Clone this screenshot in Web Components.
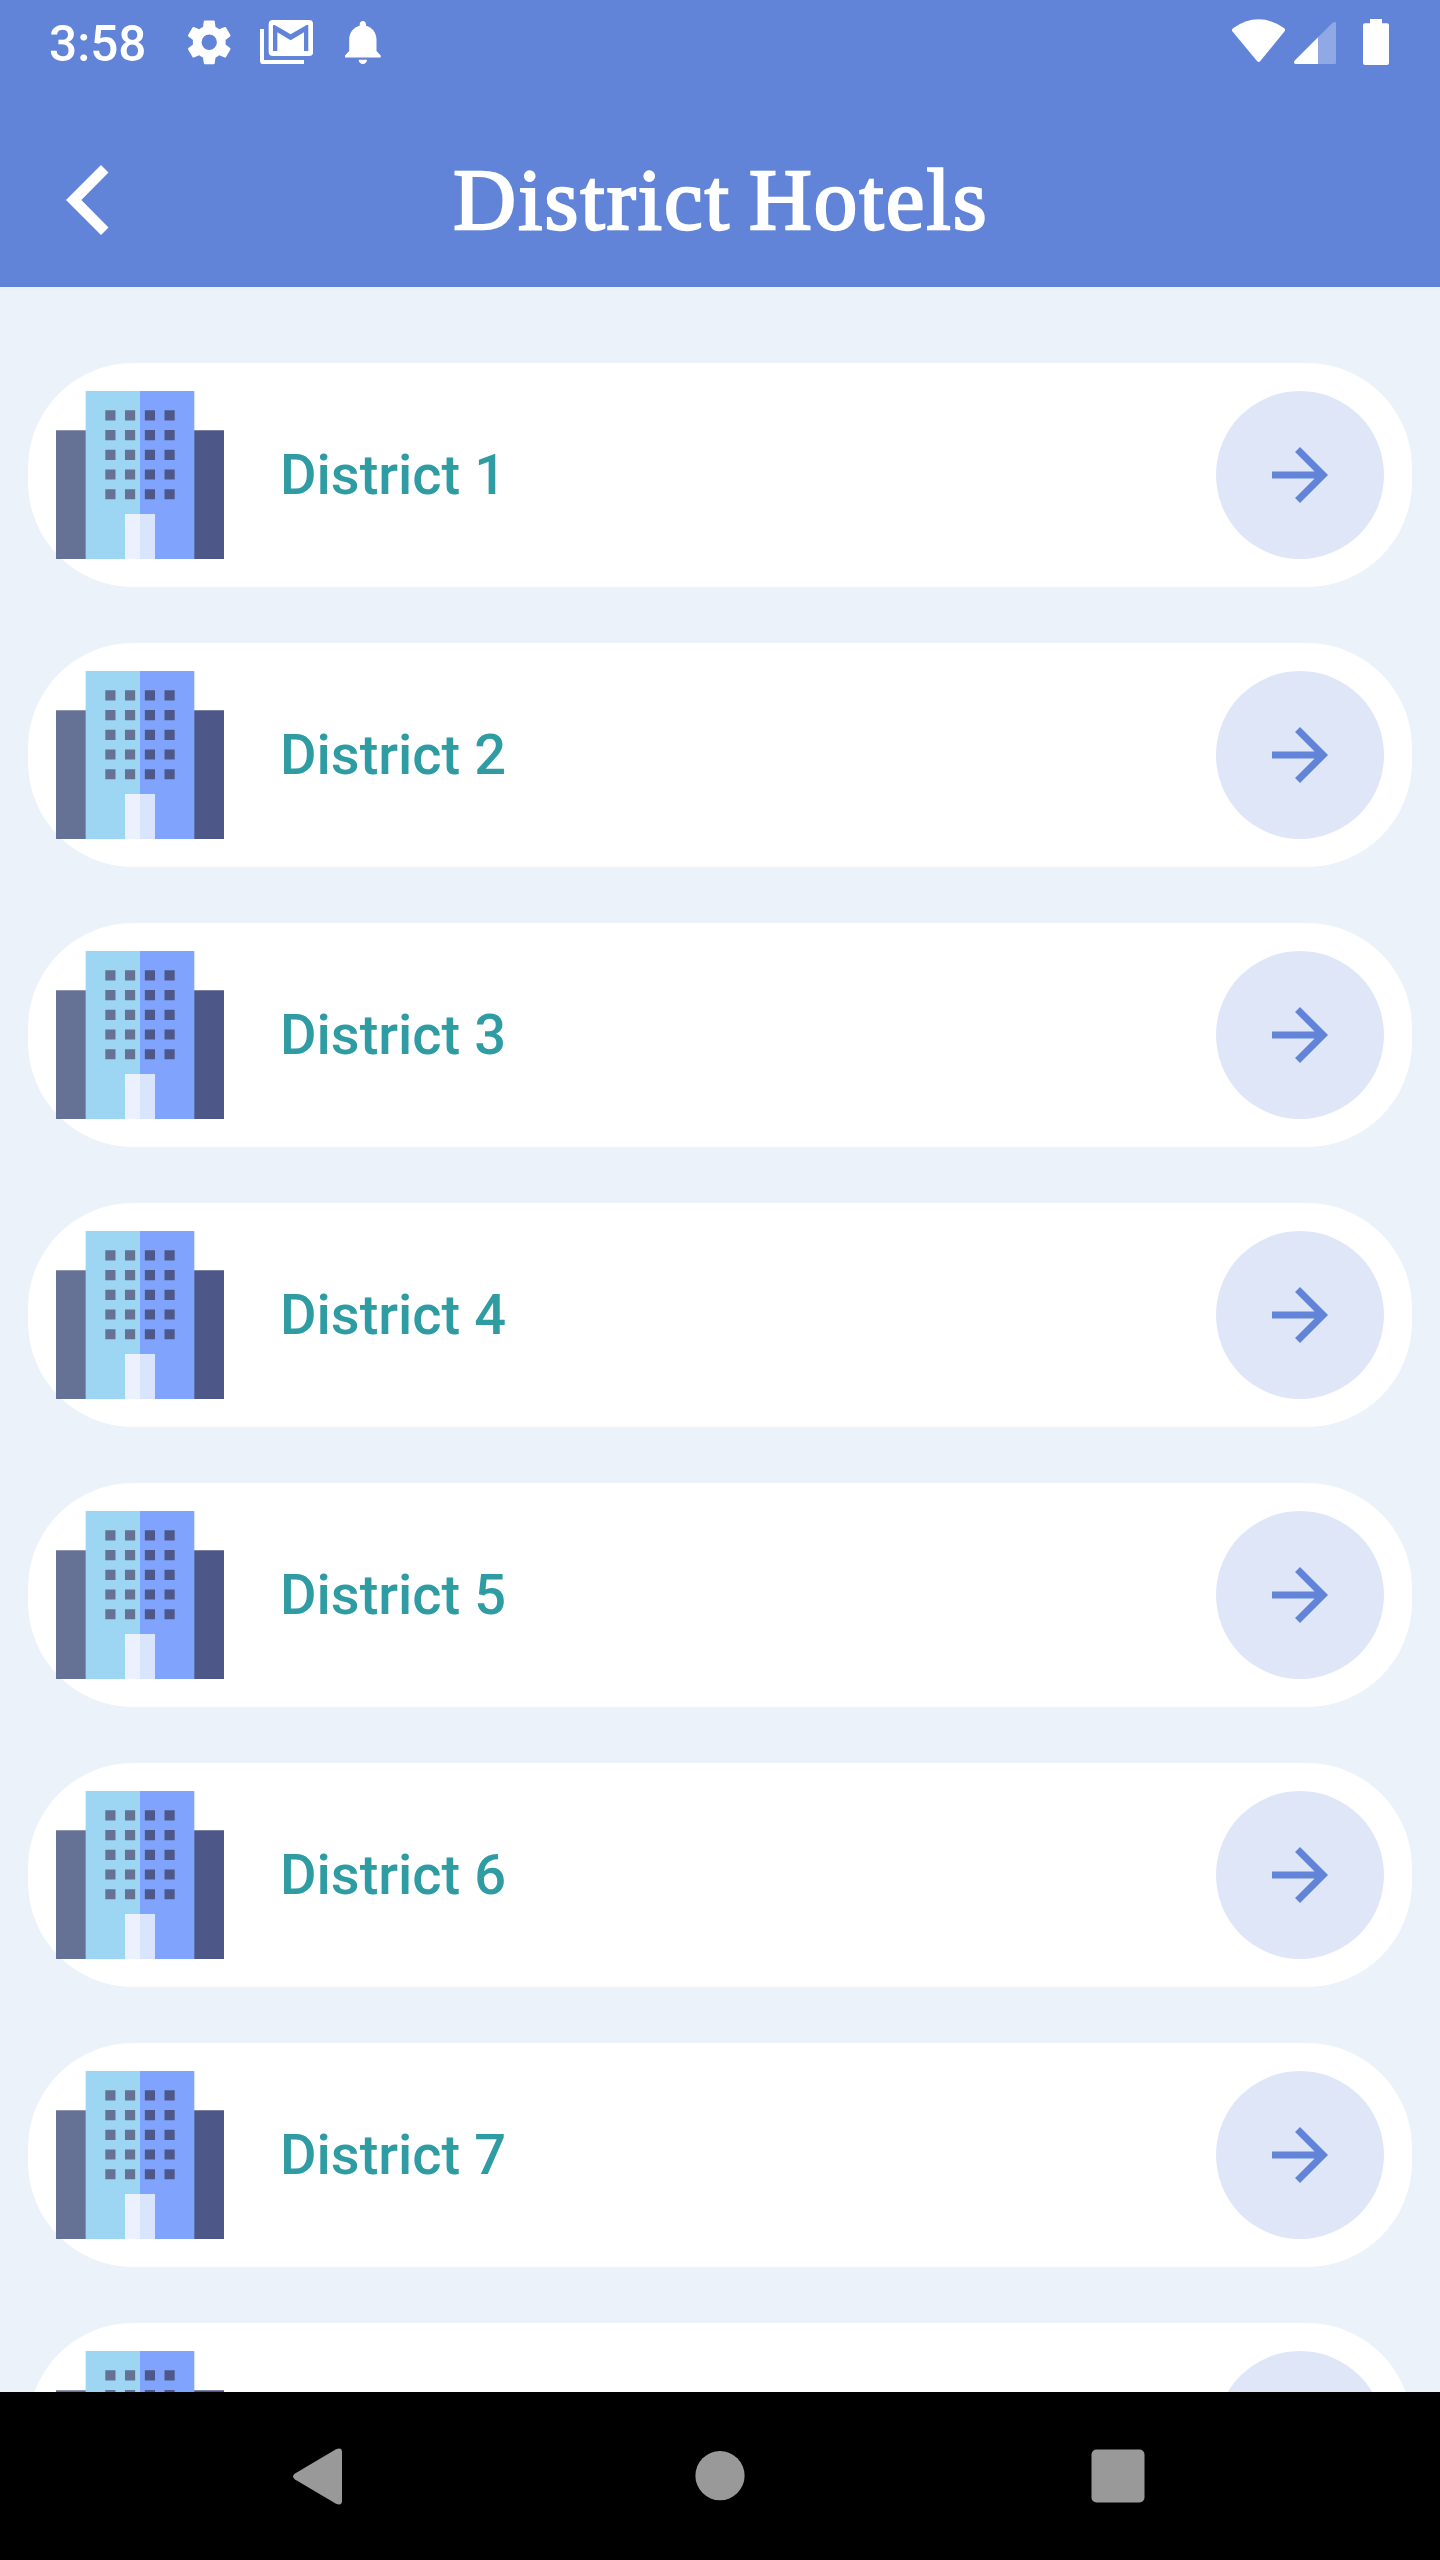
<!DOCTYPE html>
<html lang="en">
<head>
<meta charset="utf-8">
<title>District Hotels</title>
<style>
  html, body { margin: 0; height: 100%; }
  body { overflow: hidden; font-family: Roboto, sans-serif; }
</style>
</head>
<body>
<hotel-app></hotel-app>
<script>
const define = (name, markup) => {
  const template = document.createElement('template');
  template.innerHTML = markup;
  customElements.define(name, class extends HTMLElement {
    constructor() {
      super();
      this.attachShadow({ mode: 'open' }).append(template.content.cloneNode(true));
    }
  });
};

define('status-bar', `
<style>
  :host { display: flex; height: 84px; box-sizing: border-box; padding: 0 51px 0 49px; color: #fff; justify-content: space-between; }
  .group { display: flex; align-items: flex-start; }
  .time { font: 500 49.5px/58px Roboto, sans-serif; width: 139px; margin-top: 15px; white-space: nowrap; }
  svg { display: block; fill: #fff; flex: none; }
  .gear { margin: 16px 24.5px 0 -5px; }
  .mail { margin: 20px 32px 0 0; }
  .bell { margin-top: 21.3px; }
  .wifi { margin: 19px 9px 0 0; }
  .cell { margin: 22px 27px 0 0; }
  .battery { margin-top: 19px; }
</style>
<div class="group">
  <span class="time">3:58</span>
  <svg class="gear" width="52.5" height="52.5" viewBox="0 0 24 24"><path d="M19.43 12.98c.04-.32.07-.64.07-.98s-.03-.66-.07-.98l2.11-1.65c.19-.15.24-.42.12-.64l-2-3.46c-.12-.22-.39-.3-.61-.22l-2.49 1c-.52-.4-1.08-.73-1.69-.98l-.38-2.65C14.46 2.18 14.25 2 14 2h-4c-.25 0-.46.18-.49.42l-.38 2.65c-.61.25-1.17.59-1.69.98l-2.49-1c-.23-.09-.49 0-.61.22l-2 3.46c-.13.22-.07.49.12.64l2.11 1.65c-.04.32-.07.65-.07.98s.03.66.07.98l-2.11 1.65c-.19.15-.24.42-.12.64l2 3.46c.12.22.39.3.61.22l2.49-1c.52.4 1.08.73 1.69.98l.38 2.65c.03.24.24.42.49.42h4c.25 0 .46-.18.49-.42l.38-2.65c.61-.25 1.17-.59 1.69-.98l2.49 1c.23.09.49 0 .61-.22l2-3.46c.12-.22.07-.49-.12-.64zM12 15.5a3.5 3.5 0 1 1 0-7 3.5 3.5 0 0 1 0 7z"/></svg>
  <svg class="mail" width="53.3" height="44.4" viewBox="0 0 160 133"><path d="M0 27h12v93h120v13H11Q0 133 0 122z"/><path fill-rule="evenodd" d="M39 0h108q13 0 13 13v82q0 13-13 13H39q-13 0-13-13V13Q26 0 39 0zM39 15v78h13V37l40 24 40-24v56h13V15h-5L92 43 44 15z"/></svg>
  <svg class="bell" width="35.7" height="43" viewBox="3 2 17 20" preserveAspectRatio="none"><path d="M11.5 22c1.1 0 2-.9 2-2h-4c0 1.1.9 2 2 2zm6.5-6v-5.500c0-3.070-2.130-5.640-5-6.320V3.500c0-.83-.67-1.500-1.500-1.500S10 2.670 10 3.500v.68c-2.870.68-5 3.250-5 6.320V16l-2 2v1h17v-1l-2-2z"/></svg>
</div>
<div class="group">
  <svg class="wifi" width="53.3" height="43.3" viewBox="0 0 160 130"><path d="M1 37Q-2 32 3 28Q40 1 80 1T157 28Q162 32 158 37L85 126Q80 132 75 126z"/></svg>
  <svg class="cell" width="42" height="42" viewBox="0 0 126 126"><path opacity=".3" d="M72 46L115 3Q118 0 122 0Q126 0 126 4V122Q126 126 122 126H72z"/><path d="M72 46V126H5Q0 126 0 121Q0 118 3 115z"/></svg>
  <svg class="battery" width="26" height="46" viewBox="0 0 78 138"><path d="M21 0h36v13h15q6 0 6 6v113q0 6-6 6H6q-6 0-6-6V19q0-6 6-6h15z"/></svg>
</div>`);

define('app-bar', `
<style>
  :host { display: grid; grid-template-columns: 160px 1fr 160px; align-items: center; height: 203px; box-sizing: border-box; padding-top: 29px; color: #fff; }
  svg { display: block; margin-left: 66px; fill: #fff; }
  h1 { margin: 0; padding-left: 2px; text-align: center; font: 400 87px/110px "Liberation Serif", serif; white-space: nowrap; -webkit-text-stroke: 2.4px #fff; letter-spacing: 2.1px; word-spacing: -6px; }
</style>
<svg width="42.5" height="70" viewBox="0 0 42.5 70"><path d="M0 35L35 0l7.500 7.500L15.300 35l27.200 27.500L35 70z"/></svg>
<h1><slot></slot></h1>`);

define('building-icon', `
<style>
  :host { display: block; width: 168px; height: 168px; flex: none; }
  svg { display: block; }
</style>
<svg width="168" height="168" viewBox="0 0 504 504">
  <path fill="#667196" d="M0 118h91v386H0z"/>
  <path fill="#4d5888" d="M413 118h91v386h-91z"/>
  <path fill="#9dd6f3" d="M89 0h163v504H89z"/>
  <path fill="#80a4fd" d="M252 0h163v504H252z"/>
  <path stroke="#667196" stroke-width="30.5" stroke-dasharray="30.5 28.6" d="M163.200 58v268M222.200 58v268"/>
  <path stroke="#4d5888" stroke-width="30.5" stroke-dasharray="30.5 28.6" d="M281.800 58v268M340.800 58v268"/>
  <path fill="#ebf2fe" d="M207 369h45v135h-45z"/>
  <path fill="#d9e5fd" d="M252 369h45v135h-45z"/>
</svg>`);

define('district-card', `
<style>
  :host { display: flex; align-items: center; height: 224px; box-sizing: border-box; padding: 28px; border-radius: 105px; background: #fff; flex: none; }
  .label { flex: 1; margin-left: 56px; font: 500 56px/66px Roboto, sans-serif; color: #2e9ca2; white-space: nowrap; }
  .go { display: flex; align-items: center; justify-content: center; width: 168px; height: 168px; border-radius: 50%; background: #dfe6f7; }
</style>
<building-icon></building-icon>
<span class="label"><slot></slot></span>
<span class="go"><svg width="84" height="84" viewBox="0 0 24 24" fill="#6184d8"><path d="M12 4l-1.410 1.410L16.170 11H4v2h12.170l-5.580 5.590L12 20l8-8z"/></svg></span>`);

define('nav-bar', `
<style>
  :host { display: grid; grid-template-columns: 1fr 50px 1fr; align-items: center; height: 168px; box-sizing: border-box; padding: 0 295px 0 293px; background: #000; }
  svg { display: block; fill: #999; }
  svg:last-child { justify-self: end; }
  .home { margin-left: .7px; }
</style>
<svg width="49" height="57" viewBox="0 0 49 57"><path d="M2 25.500L43 1.200Q49-1 49 4V53Q49 58 43 55.800L2 31.500Q-2 28.500 2 25.500z"/></svg>
<svg class="home" width="50" height="50" viewBox="0 0 50 50"><circle cx="25" cy="24.7" r="24.6"/></svg>
<svg width="54" height="54" viewBox="0 0 54 54"><rect x=".5" y=".5" width="53" height="53" rx="5"/></svg>`);

define('hotel-app', `
<style>
  :host { display: flex; flex-direction: column; width: 1440px; height: 2560px; background: #ebf2fa; }
  header { background: #6184d8; flex: none; }
  main { flex: 1; min-height: 0; overflow: hidden; display: flex; flex-direction: column; gap: 56px; padding: 76px 28px 0; box-sizing: border-box; }
  nav-bar { flex: none; }
</style>
<header><status-bar></status-bar><app-bar>District Hotels</app-bar></header>
<main>
  <district-card>District 1</district-card>
  <district-card>District 2</district-card>
  <district-card>District 3</district-card>
  <district-card>District 4</district-card>
  <district-card>District 5</district-card>
  <district-card>District 6</district-card>
  <district-card>District 7</district-card>
  <district-card></district-card>
</main>
<nav-bar></nav-bar>`);
</script>
</body>
</html>
